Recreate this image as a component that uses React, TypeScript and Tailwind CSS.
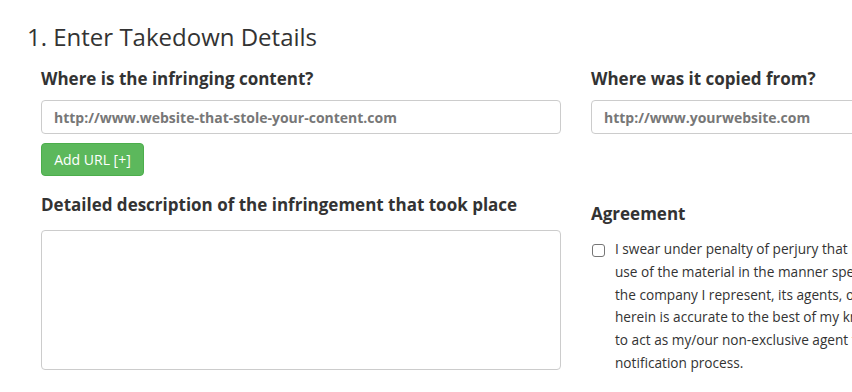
const agreementLines = [
  "I swear under penalty of perjury that I have a good faith belief that",
  "use of the material in the manner specified is not authorized by",
  "the company I represent, its agents, or the law. The information",
  "herein is accurate to the best of my knowledge. I authorize DMCA.com",
  "to act as my/our non-exclusive agent for the purposes of this takedown",
  "notification process.",
];

const App = () => {
  return (
    <div
      className="w-[852px] h-[392px] overflow-hidden bg-white text-[#333]"
      style={{ fontFamily: '"Open Sans", "Liberation Sans", sans-serif' }}
    >
      {/* heading */}
      <h2 className="pl-[27px] pt-[22px] text-[24px] leading-[30px] font-normal">
        1. Enter Takedown Details
      </h2>

      <div className="flex gap-[30px] pl-[41px] pt-[15px]">
        {/* left column */}
        <div className="w-[520px] shrink-0 flex flex-col">
          <label className="text-[17px] leading-[24px] font-bold">Where is the infringing content?</label>
          <input
            className="mt-[9px] h-[34px] w-full rounded-[4px] border border-[#ccc] px-[12px] text-[14px] font-bold placeholder:text-[#777]"
            placeholder="http://www.website-that-stole-your-content.com"
          />
          <div>
            <button className="mt-[9px] h-[33px] w-[103px] rounded-[4px] border border-[#4cae4c] bg-[#5cb85c] text-[14px] text-white">
              Add URL [+]
            </button>
          </div>
          <label className="mt-[17px] text-[17px] leading-[24px] font-bold">
            Detailed description of the infringement that took place
          </label>
          <textarea className="mt-[13px] h-[140px] w-full rounded-[4px] border border-[#ccc] resize-none" />
        </div>

        {/* right column */}
        <div className="w-[520px] shrink-0 flex flex-col">
          <label className="text-[17px] leading-[24px] font-bold whitespace-nowrap">Where was it copied from?</label>
          <input
            className="mt-[9px] h-[34px] w-full rounded-[4px] border border-[#ccc] px-[12px] text-[14px] font-bold placeholder:text-[#777]"
            placeholder="http://www.yourwebsite.com"
          />
          <h3 className="mt-[68px] text-[17px] leading-[24px] font-bold">Agreement</h3>
          <div className="mt-[12px] flex">
            <div className="mt-[6px] ml-[1px] h-[13px] w-[13px] shrink-0 rounded-[3px] border border-[#767676]" />
            <div className="ml-[10px] text-[13.65px] leading-[22.8px] text-[#333]">
              {agreementLines.map((l) => (
                <div key={l} className="whitespace-nowrap">{l}</div>
              ))}
            </div>
          </div>
        </div>
      </div>
    </div>
  );
};

export default App;
